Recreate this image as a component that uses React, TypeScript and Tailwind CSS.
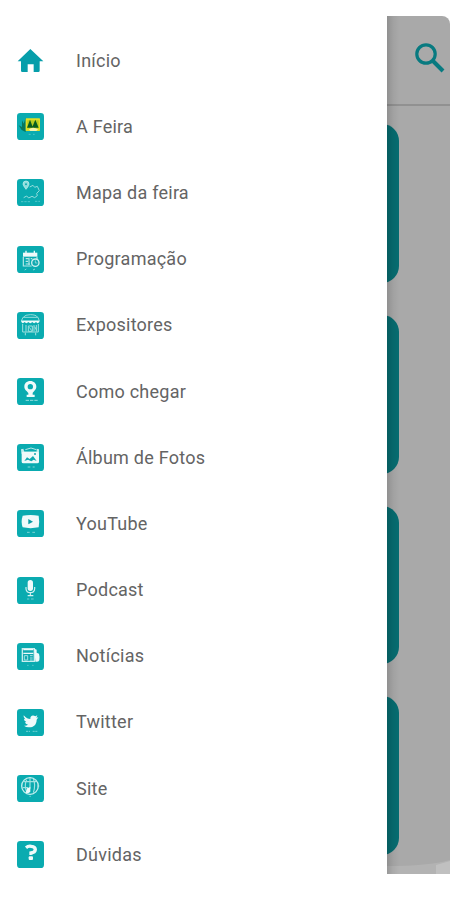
import React from 'react';

const white = '#effafa';

function Tile({ children }: { children: React.ReactNode }) {
  return (
    <svg viewBox="0 0 81 81" className="h-[27px] w-[27px] shrink-0">
      <rect width="81" height="81" rx="10" fill="#0aabb0" />
      {children}
    </svg>
  );
}

function HomeIcon() {
  return (
    <svg viewBox="0 0 81 81" className="h-[27px] w-[27px] shrink-0">
      <path d="M40 6 L79 43 H68 V71 Q68 75 64 75 H50 V52 H32 V75 H16 Q12 75 12 71 V43 H2 Z" fill="#069eaa" />
    </svg>
  );
}

function FairIcon() {
  return (
    <Tile>
      <path d="M5 37 L15 42 V22 L20 32 L26 14 V57 L14 51 Z" fill="#07765b" />
      <rect x="26" y="16" width="43" height="38" rx="2" fill="#e2df24" />
      <path d="M31 22 H65 V46 H31Z" fill="#b5cc20" />
      <path d="M39 20 L30 44 H48Z M55 20 L45 44 H65Z" fill="#075e20" />
      <path d="M36 49 Q47 39 63 49 L58 54 H40Z" fill="#f5f5b0" />
      <path d="M35 64 H41 M48 64 H53" stroke="#69d3d5" strokeWidth="2" />
    </Tile>
  );
}

function MapIcon() {
  return (
    <Tile>
      <path d="M27 31 C20 21 18 18 18 15 A9 9 0 0 1 36 15 C36 20 31 26 27 31Z" fill="#8fdedd" stroke="#c9f0ef" strokeWidth="2" />
      <circle cx="27" cy="16" r="3" fill="#10a9b0" />
      <path d="M38 24 L48 19 L53 25 L61 22 L67 35 L59 43 L61 50 L53 56 L45 52 L35 57 L29 51 L20 56" fill="none" stroke="#95dddd" strokeWidth="3" />
      <path d="M12 68 H40 M54 67 H69" stroke="#52c8cb" strokeWidth="3" strokeDasharray="7 3" />
    </Tile>
  );
}

function CalendarIcon() {
  return (
    <Tile>
      <path d="M18 20 H61 V32 H18Z" fill={white} />
      <path d="M27 14 V23 M52 14 V23" stroke={white} strokeWidth="4" />
      <path d="M19 32 V60 H44 M60 32 V39 M26 38 H34 M41 38 H46 M26 46 H33 M26 54 H39 M36 35 V57" fill="none" stroke="#b6e8e7" strokeWidth="3.5" />
      <circle cx="55" cy="50" r="11" fill="#10a9b0" stroke="#d1f1f0" strokeWidth="4" />
      <path d="M55 43 V51 H61" fill="none" stroke="#b6e8e7" strokeWidth="2" />
      <path d="M23 72 L28 69 M48 72 L54 69" stroke="#82d7d8" strokeWidth="3" />
    </Tile>
  );
}

function StallIcon() {
  return (
    <Tile>
      <path d="M20 15 Q24 8 40 8 Q57 8 61 15 M18 16 H63 L67 27 H13Z" fill="none" stroke="#95dcdc" strokeWidth="3" />
      <path d="M13 26 H67 V30 Q62 37 57 30 Q51 37 46 30 Q40 37 34 30 Q28 37 23 30 Q17 37 13 30Z" fill={white} />
      <path d="M17 36 V60 H64 V36 M27 39 V59 M34 42 H46 V58 H34Z M51 39 V58 M58 39 V59 M37 46 L44 56 M53 44 L59 55 M25 62 V70 M56 62 V70" fill="none" stroke="#9fe0df" strokeWidth="3" />
    </Tile>
  );
}

function LocationIcon() {
  return (
    <Tile>
      <path fillRule="evenodd" d="M40 9 C29 9 22 16 22 26 C22 36 31 39 34 45 V50 H29 V57 H53 V50 H47 V45 C50 39 58 35 58 26 C58 16 50 9 40 9Z M40 18 A8 8 0 1 1 40 34 A8 8 0 0 1 40 18Z" fill={white} />
      <path d="M26 67 H65" stroke="#93dede" strokeWidth="3" strokeDasharray="10 3" />
    </Tile>
  );
}

function PhotosIcon() {
  return (
    <Tile>
      <path d="M12 16 L19 14 L22 23 H59 V14 L66 16 V28 H13Z" fill="#c2eded" />
      <path d="M25 17 L42 12 L58 17" fill="none" stroke="#b4e7e7" strokeWidth="3" />
      <rect x="14" y="23" width="52" height="35" rx="5" fill={white} />
      <path d="M22 51 L30 40 L38 45 L48 36 L59 51 L50 47 L43 52 L33 47Z" fill="#10a9b0" />
      <circle cx="54" cy="30" r="3" fill="#10a9b0" />
      <path d="M32 69 H40 M47 69 H53" stroke="#85d7d7" strokeWidth="3" />
    </Tile>
  );
}

function YouTubeIcon() {
  return (
    <Tile>
      <path d="M17 17 Q40 13 65 17 Q68 35 65 52 Q40 57 17 52 Q11 35 17 17Z" fill={white} />
      <path d="M34 27 L48 35 L34 43Z" fill="#079ca5" />
      <path d="M30 67 H38 M46 67 H54" stroke="#7bd4d5" strokeWidth="3" />
    </Tile>
  );
}

function PodcastIcon() {
  return (
    <Tile>
      <rect x="32" y="9" width="16" height="33" rx="8" fill={white} />
      <path d="M27 30 V36 Q28 47 40 47 Q52 47 53 36 V30 M40 47 V57 M32 56 H49" fill="none" stroke="#d6f2f2" strokeWidth="3.5" />
      <path d="M30 66 H37 M42 66 H50" stroke="#6ccfd1" strokeWidth="3" />
    </Tile>
  );
}

function NewsIcon() {
  return (
    <Tile>
      <path d="M16 17 H52 V55 H16Z" fill="#10a9b0" stroke="#c9eeee" strokeWidth="4" />
      <path d="M19 20 H49 M19 31 H49" stroke={white} strokeWidth="4" />
      <path d="M22 38 H32 V51 H22Z M39 38 H47 M39 45 H47 M39 51 H47" fill="none" stroke="#a5e2e2" strokeWidth="3" />
      <path d="M52 17 L59 20 V29 L66 32 Q69 42 67 52 Q64 58 55 56Z" fill={white} />
      <path d="M30 67 H35 M45 67 H50" stroke="#75d2d3" strokeWidth="2" />
    </Tile>
  );
}

function TwitterIcon() {
  return (
    <Tile>
      <path d="M20 19 C27 28 34 30 40 30 C39 20 48 16 55 22 L61 19 L58 26 L64 25 L59 32 C59 48 48 56 35 55 Q27 55 21 50 Q28 51 33 47 Q25 45 24 40 L28 39 Q20 34 21 29 L25 31 Q18 25 20 19Z" fill={white} />
      <path d="M27 67 H39 M47 67 H63" stroke="#72d2d4" strokeWidth="3" strokeDasharray="6 2" />
    </Tile>
  );
}

function SiteIcon() {
  return (
    <Tile>
      <circle cx="39" cy="33" r="25" fill="none" stroke="#c6efef" strokeWidth="4" />
      <path d="M39 9 V41 M20 20 H57 M29 14 Q21 31 29 51 M49 12 Q57 30 49 53 M17 38 H33 M60 33 H67" fill="none" stroke="#9ee2e2" strokeWidth="3.5" />
      <path d="M30 40 L40 36 V50 Q35 57 26 53Z" fill={white} />
      <path d="M37 64 H42" stroke="#64cdd0" strokeWidth="3" />
    </Tile>
  );
}

function HelpIcon() {
  return (
    <Tile>
      <path d="M27 20 Q34 14 43 16 Q55 17 55 26 Q54 35 42 36 V42" fill="none" stroke={white} strokeWidth="10" />
      <rect x="35" y="46" width="13" height="11" rx="3" fill={white} />
    </Tile>
  );
}

const items = [
  { label: 'Início', Icon: HomeIcon },
  { label: 'A Feira', Icon: FairIcon },
  { label: 'Mapa da feira', Icon: MapIcon },
  { label: 'Programação', Icon: CalendarIcon },
  { label: 'Expositores', Icon: StallIcon },
  { label: 'Como chegar', Icon: LocationIcon },
  { label: 'Álbum de Fotos', Icon: PhotosIcon },
  { label: 'YouTube', Icon: YouTubeIcon },
  { label: 'Podcast', Icon: PodcastIcon },
  { label: 'Notícias', Icon: NewsIcon },
  { label: 'Twitter', Icon: TwitterIcon },
  { label: 'Site', Icon: SiteIcon },
  { label: 'Dúvidas', Icon: HelpIcon },
];

export default function App() {
  return (
    <main className="flex h-[900px] w-[450px] overflow-hidden bg-white font-['Roboto',sans-serif]">
      <nav className="flex w-[387px] shrink-0 flex-col pt-[27.5px]">
        {items.map(({ label, Icon }) => (
          <a key={label} className="flex h-[66.2px] shrink-0 items-center gap-[32px] pl-[17px]">
            <Icon />
            <span className="whitespace-nowrap text-[18px] leading-6 tracking-[0.24px] text-[#646464]">{label}</span>
          </a>
        ))}
      </nav>
      <section className="relative mt-4 flex h-[858px] w-[63px] flex-col overflow-hidden rounded-tr-[8px] bg-[#a9a9a9]">
        <header className="flex h-[90px] shrink-0 border-b-2 border-[#919191] pl-[28px] pt-[26px]">
          <svg viewBox="0 0 30 32" className="h-8 w-[30px]" fill="none" stroke="#087a80">
            <circle cx="11" cy="12" r="9.2" strokeWidth="3.2" />
            <path d="M18 19 L28 29" strokeWidth="4" />
          </svg>
        </header>
        <div className="flex flex-col gap-[32px] pt-[18px]">
          {[0, 1, 2, 3].map((card) => (
            <div key={card} className="-ml-[20px] h-[158.8px] w-[31.5px] shrink-0 rounded-r-[17px] bg-[#066c70]" />
          ))}
        </div>
        <svg viewBox="0 0 63 20" className="absolute bottom-0 left-0 h-5 w-[63px]">
          <path d="M0 12 Q41 12 63 6 V20 H0Z" fill="#b3b3b3" />
          <path d="M49 11 L63 7 V20 H49Z" fill="#c0c0c0" />
        </svg>
        <div className="absolute inset-y-0 left-0 w-3 bg-linear-to-r from-black/15 via-black/5 to-transparent" />
      </section>
    </main>
  );
}
